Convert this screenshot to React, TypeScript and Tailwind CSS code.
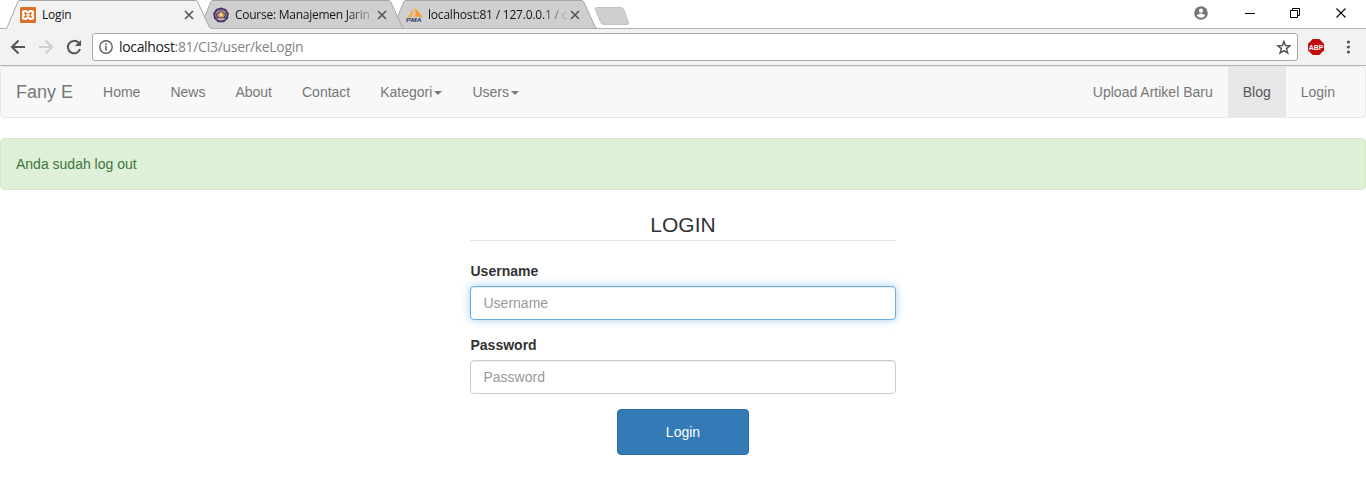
import React from "react";

const CHROME_FONT = "font-['Open_Sans','Noto_Sans',sans-serif]";

function XamppIcon() {
  return (
    <svg width="16" height="16" viewBox="0 0 16 16" className="block">
      <rect width="16" height="16" rx="1" fill="#dd6f2c" />
      <g fill="none" stroke="#fff" strokeWidth="2.2" strokeLinecap="round" strokeLinejoin="round">
        <path d="M4.8 4.2H6.2L8 5.8 9.8 4.2H11.2Q13 4.2 13 5.6V6.6L12 8 13 9.4V10.4Q13 11.8 11.2 11.8H9.8L8 10.2 6.2 11.8H4.8Q3 11.8 3 10.4V9.4L4 8 3 6.6V5.6Q3 4.2 4.8 4.2Z" />
        <path d="M6.6 8H9.4" strokeWidth="1.5" />
      </g>
    </svg>
  );
}

function CrestIcon() {
  return (
    <svg width="16" height="16" viewBox="0 0 16 16" className="block">
      <path d="M8 .4 12.9 2 15.7 6.2 15 11.6 11 15.2H5L1 11.6.3 6.2 3.1 2Z" fill="#3a3268" />
      <circle cx="8" cy="8" r="5.8" fill="#a8899a" />
      <path d="M8 2 10.2 5.3 13.2 7 11.8 11.8H4.2L2.8 7 5.8 5.3Z" fill="#4a3560" />
      <path d="M8 3 9.8 6 12.2 7.4 10.6 10.4H5.4L3.8 7.4 6.2 6Z" fill="#cf9a58" />
      <circle cx="8" cy="7.8" r="1.4" fill="#f5e1a1" />
      <path d="M4.5 11.4H11.5V12.8H4.5Z" fill="#d6c1b0" />
    </svg>
  );
}

function PmaIcon() {
  return (
    <svg width="17" height="16" viewBox="0 0 17 16" className="block">
      <path d="M6.6 1Q7.4 6 5.8 10L1.2 10.6Q5.4 6.4 6.6 1Z" fill="#f5a94c" />
      <path d="M8.6 1.4Q14.5 4.8 15.8 10.2L9 9.6Q10.2 5.4 8.6 1.4Z" fill="#f79a2c" />
      <path d="M7.8 4V10" stroke="#e9bd83" strokeWidth="1" />
      <text x="0" y="15.4" fontSize="5.8" fontWeight="bold" fontStyle="italic" fontFamily="Liberation Sans, sans-serif" textLength="15.5" lengthAdjust="spacingAndGlyphs" fill="#33386c">PMA</text>
    </svg>
  );
}

type TabProps = { icon: React.ReactNode; title: string; active?: boolean; layer: string; spacing: string };

function BrowserTab({ icon, title, active, layer, spacing }: TabProps) {
  return (
    <div className={`relative flex h-[29px] w-[193px] shrink-0 items-center pl-[14px] pt-px ${layer}`}>
      <svg width="206" height="29" viewBox="0 0 206 29" className="absolute left-0 top-0">
        <path d="M0 28.5 1.5 26.5 12 1.5 13 .5H190L191.5 1.5 203 26.5 205.5 28.5V29H0Z" fill={active ? "#f2f2f2" : "#cfcfcf"} />
        <path d="M0 28.5Q1 28.3 1.5 26.5L12 1.5 13 .5H190L191.5 1.5 203 26.5Q204 28.3 205.5 28.5" fill="none" stroke="#a6a6a6" />
        {!active && <path d="M0 28.5H206" stroke="#b0b0b0" />}
      </svg>
      <div className="relative w-[22px] shrink-0">{icon}</div>
      <div
        className={`relative w-[140px] whitespace-nowrap text-[12px] leading-[18px] text-[#151515] ${spacing} ${active ? "" : "[mask-image:linear-gradient(to_right,black_112px,transparent_142px)]"}`}
      >
        {title}
      </div>
      <svg width="10" height="10" viewBox="0 0 10 10" className="relative ml-[2px] shrink-0">
        <path d="M1 1 9 9M9 1 1 9" stroke="#545454" strokeWidth="1.6" />
      </svg>
    </div>
  );
}

function TabStrip() {
  return (
    <div className="relative flex h-[29px] bg-white">
      <div className="absolute inset-x-0 bottom-0 h-px bg-[#b0b0b0]" />
      <div className="flex flex-1 pl-[6px]">
        <BrowserTab active icon={<XamppIcon />} title="Login" layer="z-30" spacing="tracking-[-0.2px]" />
        <BrowserTab icon={<CrestIcon />} title="Course: Manajemen Jarin" layer="z-20" spacing="tracking-[-0.26px]" />
        <BrowserTab icon={<PmaIcon />} title="localhost:81 / 127.0.0.1 / c" layer="z-10" spacing="tracking-[-0.2px]" />
        <svg width="36" height="20" viewBox="0 0 36 20" className="ml-[9px] mt-[6px]">
          <path d="M2.5 1.5H27Q29 1.5 29.8 3.5L34.5 16.5Q35 18.5 33 18.5H10Q7.5 18.5 6.7 16.5L1.2 3Q.8 1.5 2.5 1.5Z" fill="#cfcfcf" stroke="#c2c2c2" />
        </svg>
      </div>
      <svg width="14" height="14" viewBox="0 0 14 14" className="mr-[37px] mt-[6px]">
        <circle cx="7" cy="7" r="6.8" fill="#757575" />
        <circle cx="7" cy="4.7" r="2.1" fill="#fff" />
        <path d="M2.7 9.2Q7 5.8 11.3 9.2 9.8 11.7 7 11.7T2.7 9.2Z" fill="#fff" />
      </svg>
      <svg width="10" height="11" viewBox="0 0 10 11" className="mr-[35px] mt-2">
        <path d="M0 5.5H10" stroke="#000" />
      </svg>
      <svg width="11" height="11" viewBox="0 0 11 11" className="mr-[35px] mt-2">
        <path d="M.5 2.5H7.5V9.5H.5ZM2.5 2.5V.5H9.5V7.5H7.5" fill="none" stroke="#000" />
      </svg>
      <svg width="11" height="11" viewBox="0 0 11 11" className="mr-[19px] mt-2">
        <path d="M.5.5 9.5 9.5M9.5.5.5 9.5" stroke="#000" strokeWidth="1.1" />
      </svg>
    </div>
  );
}

function Toolbar() {
  return (
    <div className="flex h-[37px] items-center border-b border-[#b3b3b3] bg-[#f2f2f2]">
      <svg width="92" height="36" viewBox="0 0 92 36" fill="none" strokeWidth="2">
        <path d="M25 18H12.5M18.5 11.5 12 18 18.5 24.5" stroke="#555" />
        <path d="M39 18H51.5M45.5 11.5 52 18 45.5 24.5" stroke="#d0d0d0" />
        <path d="M78.6 13.8A6.2 6.2 0 1 0 80 20" stroke="#555" />
        <path d="M81 11V17H75Z" fill="#555" />
      </svg>
      <div className="flex h-[28px] w-[1206px] items-center rounded-[3px] border border-[#a9a9a9] bg-white pl-[6px] pr-[6px]">
        <svg width="14" height="14" viewBox="0 0 14 14" fill="none" stroke="#5c5c5c">
          <circle cx="7" cy="7" r="6.2" strokeWidth="1.4" />
          <path d="M7 6V10.6M7 3.3V4.9" strokeWidth="1.6" />
        </svg>
        <div className="ml-[6px] flex-1 whitespace-nowrap text-[14px] leading-5 tracking-[-0.34px] text-[#858585]">
          <span className="text-[#202020]">localhost</span>:81/CI3/user/keLogin
        </div>
        <svg width="15" height="15" viewBox="0 0 15 15">
          <path d="M7.9 1.4 9.4 5.5 13.9 5.8 10.4 8.6 11.7 13.1 7.9 10.7 4.1 13.1 5.4 8.6 1.9 5.8 6.4 5.5Z" fill="none" stroke="#555" strokeWidth="1.5" />
        </svg>
      </div>
      <svg width="16" height="16" viewBox="0 0 16 16" className="ml-[10px]">
        <path d="M4.7 0H11.3L16 4.7V11.3L11.3 16H4.7L0 11.3V4.7Z" fill="#c30b0b" />
        <text x=".8" y="10.8" fontSize="8" fontWeight="bold" fontFamily="Liberation Sans, sans-serif" textLength="14.4" lengthAdjust="spacingAndGlyphs" fill="#fff">ABP</text>
      </svg>
      <svg width="4" height="14" viewBox="0 0 4 14" className="ml-[22px]" fill="#555">
        <circle cx="2.4" cy="2" r="1.6" />
        <circle cx="2.4" cy="7" r="1.6" />
        <circle cx="2.4" cy="12" r="1.6" />
      </svg>
    </div>
  );
}

function NavItem({ label, caret, active }: { label: string; caret?: boolean; active?: boolean }) {
  return (
    <a className={`flex h-[50px] items-center px-[15px] ${active ? "bg-[#e7e7e7] text-[#555]" : "text-[#777]"}`}>
      {label}
      {caret && <span className="ml-[2px] mt-[2px] border-x-4 border-t-4 border-x-transparent border-t-[#777]" />}
    </a>
  );
}

function Field({ label, type, focused }: { label: string; type: string; focused?: boolean }) {
  return (
    <div className="mb-[15px]">
      <label className="mb-[5px] block pl-[0.5px] font-bold">{label}</label>
      <input
        type={type}
        placeholder={label}
        className={`block h-[34px] w-full rounded border bg-white px-[12.5px] text-[14px] text-[#555] outline-none placeholder:text-[#999] ${
          focused
            ? "border-[#66afe9] shadow-[inset_0_1px_1px_rgba(0,0,0,0.075),0_0_8px_rgba(102,175,233,0.6)]"
            : "border-[#ccc] shadow-[inset_0_1px_1px_rgba(0,0,0,0.075)]"
        }`}
      />
    </div>
  );
}

export default function App() {
  return (
    <div className="h-[492px] w-[1366px] overflow-hidden bg-white font-['Liberation_Sans',Arial,sans-serif] text-[14px] leading-5 text-[#333]">
      <header className={CHROME_FONT}>
        <TabStrip />
        <Toolbar />
      </header>
      <nav className="mb-5 flex h-[52px] justify-between rounded border border-[#e7e7e7] bg-[#f8f8f8]">
        <div className="flex">
          <a className="flex h-[50px] items-center px-[15px] text-[18px] text-[#777]">Fany E</a>
          <NavItem label="Home" />
          <NavItem label="News" />
          <NavItem label="About" />
          <NavItem label="Contact" />
          <NavItem label="Kategori" caret />
          <NavItem label="Users" caret />
        </div>
        <div className="flex pr-[15px]">
          <NavItem label="Upload Artikel Baru" />
          <NavItem label="Blog" active />
          <NavItem label="Login" />
        </div>
      </nav>
      <div className="mb-5 flex h-[52px] items-center rounded border border-[#d6e9c6] bg-[#dff0d8] px-[15px] text-[#3c763d]">
        Anda sudah log out
      </div>
      <form className="mx-auto w-[426px]">
        <h1 className="mb-5 h-[31px] border-b border-[#e5e5e5] text-center text-[21px] leading-[30px]">LOGIN</h1>
        <Field label="Username" type="text" focused />
        <Field label="Password" type="password" />
        <button type="button" className="mx-auto block h-[46px] w-[132px] rounded border border-[#2e6da4] bg-[#337ab7] text-white">
          Login
        </button>
      </form>
    </div>
  );
}
